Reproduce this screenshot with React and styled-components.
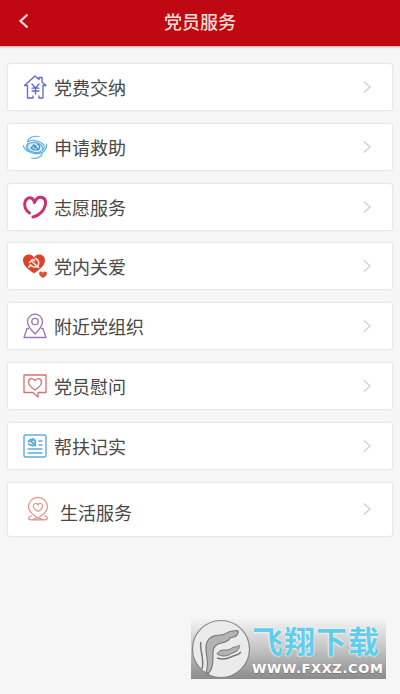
import React from "react";
import styled, { createGlobalStyle } from "styled-components";

const GlobalStyle = createGlobalStyle`
  body {
    margin: 0;
    background-color: #f6f6f6;
    font-family: Roboto, "Noto Sans CJK SC", sans-serif;
  }
`;

const Page = styled.div`
  display: flex;
  flex-direction: column;
  box-sizing: border-box;
  min-height: 694px;
  overflow: hidden;
`;

const Header = styled.header`
  display: grid;
  grid-template-columns: 48px 1fr 48px;
  align-items: center;
  box-sizing: border-box;
  height: 46px;
  padding-bottom: 4px;
  background-color: #bf0811;
  box-shadow: 0 1px 2px rgba(150, 30, 30, 0.4);
`;

const BackButton = styled.button`
  display: flex;
  padding: 0 0 0 17px;
  border: none;
  background: none;
`;

const Title = styled.h1`
  margin: 0;
  font-family: "Noto Sans CJK SC", sans-serif;
  font-size: 18px;
  font-weight: 500;
  line-height: 24px;
  text-align: center;
  color: #fbdcd8;
`;

const List = styled.main`
  display: flex;
  flex-direction: column;
  gap: 11.8px;
  padding: 17px 7px 0;
`;

const Row = styled.div`
  display: flex;
  align-items: center;
  box-sizing: border-box;
  height: ${({ $tall }) => ($tall ? 55 : 48)}px;
  padding: ${({ $tall }) => ($tall ? "0 20px 0 17px" : "0 20px 0 14px")};
  border: 1px solid #e8e8e8;
  border-radius: 3px;
  background-color: #fff;
  box-shadow: 0 0 2px rgba(0, 0, 0, 0.06);
`;

const IconBox = styled.span`
  display: flex;
  width: 26px;
  margin-right: ${({ $tall }) => ($tall ? 9 : 6)}px;
`;

const Label = styled.span`
  flex: 1;
  padding-top: ${({ $tall }) => ($tall ? 6 : 0)}px;
  font-family: "Noto Sans CJK SC", sans-serif;
  font-size: 18px;
  line-height: 26px;
  color: #484848;
`;

const Spacer = styled.div`
  flex: 1;
`;

const Watermark = styled.div`
  display: flex;
  align-items: center;
  align-self: flex-end;
  box-sizing: border-box;
  width: 195px;
  height: 60px;
  margin: 0 14px 15px 0;
  background: linear-gradient(#f3f3f3, #c4c4c4 50%, #8b8b8b);
`;

const Brand = styled.div`
  display: flex;
  flex-direction: column;
  width: 134px;
  margin: 4px 0 0 1px;
`;

const BrandName = styled.span`
  font-family: "Liberation Sans", "Noto Sans CJK SC", sans-serif;
  font-size: 31px;
  font-weight: 700;
  line-height: 36px;
  letter-spacing: 1px;
  white-space: nowrap;
  color: #62cdea;
  text-shadow: 0 0 2px #fff, 0 0 2px #fff;
`;

const BrandUrl = styled.span`
  font-family: "DejaVu Sans", sans-serif;
  font-size: 13px;
  font-weight: 700;
  line-height: 16px;
  letter-spacing: 0.65px;
  white-space: nowrap;
  color: #fff;
  text-shadow: 0 1px 1px #777;
`;

const Icon = ({ color, width = 1.3, children }) => (
  <svg
    width="26"
    height="26"
    viewBox="0 0 26 26"
    fill="none"
    stroke={color}
    strokeWidth={width}
    strokeLinecap="round"
    strokeLinejoin="round"
  >
    {children}
  </svg>
);

const HouseIcon = () => (
  <Icon color="#5f68c4">
    <path d="M5.500 11.500H2.500L13 2l4 3.500V3.500h3V8l4 3.500h-3V24h-4v-2M5.500 11.500V24H11v-2" />
    <path d="M10 10l3.500 4 3.500-4M10 14.200h7M10 17h7M13.500 14v6" />
  </Icon>
);

const AidIcon = () => (
  <Icon color="#62b0e2" width={1.2}>
    <ellipse cx="13" cy="13.500" rx="8" ry="5" fill="#d3eefa" transform="rotate(12 13 13.500)" />
    <path d="M17 2.500C11.500 1.500 6 3.500 5.500 8c4-2.500 11-2 15.500 2 2 2 1.500 5-.5 6.500M9.500 24c6 1.500 10.500-1.500 11-5.500-4 2-11 1.500-15-2-2-2-1.500-5 .5-7" />
    <path d="M24.500 10c.3 3-1 6.500-4 8.500M1.500 11.500c.5 3 2 5 4.500 6" />
    <path stroke="#3f8fcb" d="M9 14l3-3 2 1-2 2M11.500 11l5 4.500M15.500 10c3.500 1.500 2.500 6-1.500 6-2 0-3-.3-4.500-1.500" />
  </Icon>
);

const HeartIcon = () => (
  <Icon color="#c8336f" width={3}>
    <path d="M12.500 8.500C12 4.500 8.500 2.800 5.800 4.300 2.500 6 2 10.500 3.300 14c1 2.500 2.500 4 4.200 5" />
    <path d="M13 7.500c1.500-3.500 4.500-4.800 7.200-4 3 1 3.800 4.500 3 8-1.200 5-6 10-12.200 11.500" />
  </Icon>
);

const PartyHeartIcon = () => (
  <Icon color="none">
    <path
      fill="#dc432b"
      d="M12 20.500C8 17.500 1 13 1 7.500 1 4 3.500 1.500 6.700 1.500c2.300 0 4.200 1.200 5.300 3.200 1-2 3-3.200 5.300-3.200C20.500 1.500 23 4 23 7.500 23 13 16 17.500 12 20.500z"
    />
    <path
      fill="#dc5538"
      d="M21 25c-1.500-1.200-4-2.500-4-4.600 0-2.300 3-2.700 4-.7 1-2 4-1.600 4 .7 0 2.100-2.500 3.400-4 4.600z"
    />
    <path
      stroke="#ffe9dc"
      strokeWidth="1.700"
      d="M7.500 9.500l3-3 2 1M9.500 8l7 6.500M13.500 5.500c4.500 2 4 8.500-.5 8.500-2 0-3.500-.8-4.500-2M8.500 12L7 14"
    />
  </Icon>
);

const PinIcon = () => (
  <Icon color="#9a76b2">
    <path d="M13 21C9.500 17.500 5.500 13 5.500 8.700a7.500 7.500 0 0 1 15 0C20.500 13 16.500 17.500 13 21z" />
    <circle cx="13" cy="8.500" r="3.200" />
    <path d="M6.500 15.500H5L2 24.500h22l-3-9h-1.500" />
  </Icon>
);

const MessageIcon = () => (
  <Icon color="#d96f72">
    <path d="M2 2h22v17.500h-8v4.500l-5-4.500H2z" />
    <path d="M13 17c-3.800-2.500-6.500-4.700-6.500-7.800C6.500 5 11.500 4.500 13 7.800c1.500-3.300 6.500-2.800 6.500 1.400 0 3.100-2.700 5.300-6.500 7.800z" />
  </Icon>
);

const RecordIcon = () => (
  <Icon color="#62abdc" width={1.4}>
    <path d="M5.500 2h-2C2.500 2 2 2.800 2 3.500v19c0 1 .7 1.500 1.500 1.500h19c1 0 1.500-.7 1.500-1.500v-19c0-1-.7-1.500-1.500-1.500h-2M8.500 2h9M7 1.500v1M19 1.500v1" />
    <path d="M17 8h3M17 12h3M6 16h14M6 20h14" />
    <path strokeWidth="1.900" d="M6.500 8.500l2-2 1.500 1M8 7.500l5.500 5M10.500 6c4 1 3.500 6.500 0 6.500-1.500 0-2.500-.5-3.500-1.500" />
  </Icon>
);

const LifeIcon = () => (
  <Icon color="#e0958b" width={1.2}>
    <path d="M13 22C8 19 3.500 15.500 3.500 10.800a9.500 9.500 0 0 1 19 0C22.500 15.500 18 19 13 22z" />
    <path d="M13 15.500c-2.800-1.700-4.700-3.300-4.700-5.500 0-3 3.700-3.300 4.700-1 1-2.300 4.700-2 4.700 1 0 2.200-1.900 3.800-4.700 5.500z" />
    <path d="M6.500 20c-4 .5-3.500 4 0 3.800 2.500 0 4-1.800 6.500-1.800s4 1.800 6.500 1.800c3.500.2 4-3.300 0-3.800M8 23.800h10" />
  </Icon>
);

const ChevronRight = () => (
  <svg width="10" height="14" viewBox="0 0 10 14" fill="none" stroke="#d0d0d0" strokeWidth="1.300">
    <path d="M2 1.500L8 7l-6 5.500" />
  </svg>
);

const Emblem = () => (
  <svg width="60" height="60" viewBox="0 0 60 60">
    <circle cx="30" cy="30" r="28.500" fill="#ebebeb" stroke="#858585" strokeWidth="1.200" />
    <path
      fill="#b3b3b3"
      stroke="#777"
      strokeWidth="1.100"
      d="M15 53c4-9-1-18 0-26 1-8 7-11 15-11 5 0 6-4 12-4 2 0 4-1 5 0 1 2-1 5-4 6l-4 1c-2 5-8 4-12 6-6 3-5 8-5 14 0 7-1 12-5 16z"
    />
    <path
      fill="#b3b3b3"
      stroke="#777"
      d="M26 35c2-4 5-4 9-4 5 0 6-3 9-3 2 0 3-1 4-2 1 3-1 6-4 7-5 2-7 4-11 4-3 0-5-1-7-2z"
    />
    <path fill="none" stroke="#777" strokeWidth="1.500" d="M26 39c6 2 10 1 14-1 3-2 7-1 10-5M10 23c-2 8 4 17 1 27" />
  </svg>
);

const services = [
  { label: "党费交纳", icon: HouseIcon },
  { label: "申请救助", icon: AidIcon },
  { label: "志愿服务", icon: HeartIcon },
  { label: "党内关爱", icon: PartyHeartIcon },
  { label: "附近党组织", icon: PinIcon },
  { label: "党员慰问", icon: MessageIcon },
  { label: "帮扶记实", icon: RecordIcon },
  { label: "生活服务", icon: LifeIcon, tall: true },
];

const App = () => {
  return (
    <Page>
      <GlobalStyle />
      <Header>
        <BackButton>
          <svg width="14" height="18" viewBox="0 0 14 18" fill="none" stroke="#fbdcd8" strokeWidth="2.300">
            <path d="M10.500 2.500L3.500 9l7 6.500" />
          </svg>
        </BackButton>
        <Title>党员服务</Title>
      </Header>
      <List>
        {services.map(({ label, icon: ServiceIcon, tall }) => (
          <Row key={label} $tall={tall}>
            <IconBox $tall={tall}>
              <ServiceIcon />
            </IconBox>
            <Label $tall={tall}>{label}</Label>
            <ChevronRight />
          </Row>
        ))}
      </List>
      <Spacer />
      <Watermark>
        <Emblem />
        <Brand>
          <BrandName>飞翔下载</BrandName>
          <BrandUrl>WWW.FXXZ.COM</BrandUrl>
        </Brand>
      </Watermark>
    </Page>
  );
};

export default App;
